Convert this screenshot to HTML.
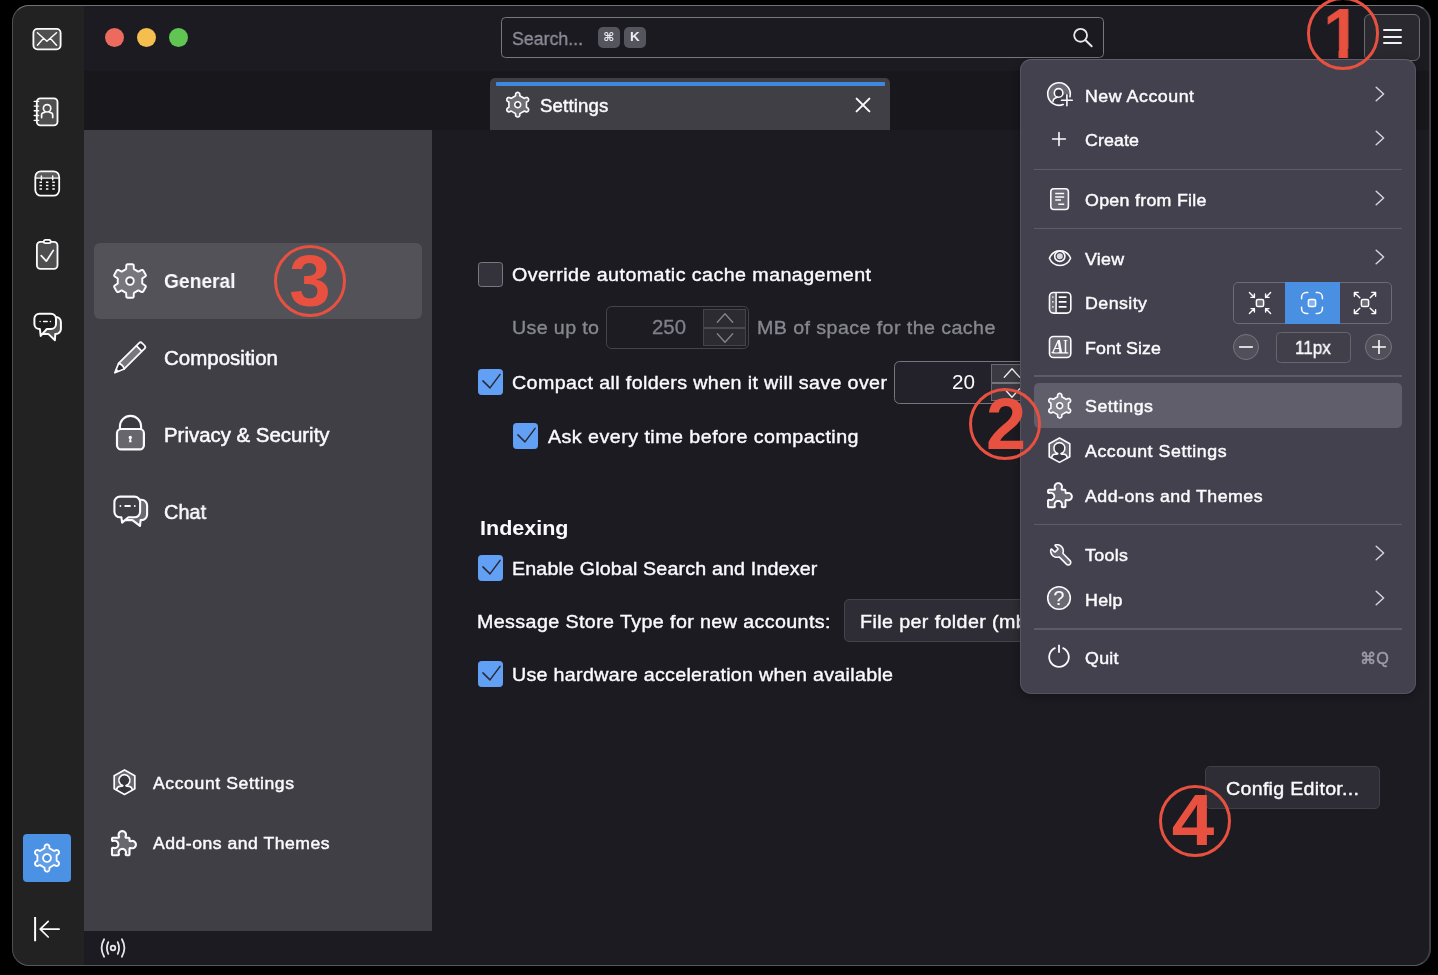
<!DOCTYPE html>
<html lang="en"><head><meta charset="utf-8"><title>Thunderbird Settings</title>
<style>
*{box-sizing:border-box;margin:0;padding:0}
html,body{width:1438px;height:975px;background:#000;overflow:hidden}
body{font-family:"Liberation Sans",sans-serif;color:#fbfbfe;position:relative}
#win{position:absolute;left:0;top:0;width:1438px;height:975px;overflow:hidden}
#frame{position:absolute;left:12px;top:4.5px;width:1419px;height:961.3px;border-radius:17px;overflow:hidden;background:#1c1b22}
#frame>.in{position:absolute;left:-12px;top:-4.5px;width:1438px;height:975px}
#frameborder{position:absolute;left:12px;top:4.5px;width:1419px;height:961.3px;border-radius:17px;border:1.5px solid #4e4e51;border-right-width:2px;border-color:#727276 #3f3f42 #58585b #4e4e51;pointer-events:none}
.b{position:absolute}
.t{position:absolute;white-space:pre;line-height:1.12;transform-origin:0 50%;will-change:transform;font-family:"Liberation Sans",sans-serif}
.i{position:absolute;overflow:visible}
.spaces{left:12px;top:4px;width:72px;height:962px;background:#222222}
.titlebar{left:84px;top:4px;width:1348px;height:67px;background:#1c1b22}
.tabbar{left:84px;top:71px;width:1348px;height:59px;background:#17171c}
.sidebar{left:84px;top:130px;width:348px;height:801px;background:#403f45}
.content{left:432px;top:130px;width:1000px;height:801px;background:#1c1b22}
.status{left:84px;top:931px;width:1348px;height:35px;background:#1c1b22}
.tl{width:19.4px;height:19.4px;border-radius:50%;top:27.8px}
.search{left:500.8px;top:17.2px;width:602.8px;height:40.6px;border:1.4px solid #77777e;border-radius:4.5px;background:#1b1a21}
.kbd{will-change:transform;top:27.2px;width:21.7px;height:20.6px;border-radius:5px;background:#55555d;color:#ececf1;font-size:13.5px;font-weight:700;text-align:center;line-height:20.6px}
.tab{left:490px;top:77.5px;width:399.5px;height:52.5px;background:#403f45;border-radius:5px 5px 0 0}
.tabline{left:495.6px;top:82px;width:389.8px;height:3.9px;border-radius:.8px;background:#3f88e0}
.hamb{left:1364px;top:13.5px;width:55.5px;height:47.5px;border:1.2px solid #696970;border-radius:6px;background:#2a2930}
.hl{left:1382.5px;width:19px;height:2px;background:#f2f2f5;border-radius:1px}
.cat-sel{left:94px;top:242.5px;width:328px;height:76.5px;border-radius:6px;background:#535259}
.spacebtn{left:23.1px;top:834.1px;width:48.1px;height:48.1px;border-radius:4px;background:#4b91e4}
.cb{width:25.6px;height:25.6px;border-radius:3.3px;border:1.3px solid #787881;background:#34333b}
.cb.on{background:#62a0f6;border-color:#62a0f6}
.num{border:1.3px solid #77767f;border-radius:5.5px;background:#23222a}
.spin{background:#3b3a42;border:1px solid #6a6a72}
.select{left:844px;top:599.4px;width:200px;height:42.3px;border-radius:5px;background:#2e2d35;border:1.2px solid #45444d}
.cfg{left:1205px;top:766.3px;width:174.8px;height:42.8px;border-radius:5px;background:#2e2d35;border:1.2px solid #403f48}
#menu{position:absolute;left:1020px;top:58.8px;width:396px;height:635.6px;border-radius:11px;background:#42414d;border:1px solid #55545f;border-top-color:#605f6a;box-shadow:0 2px 9px rgba(0,0,0,.32)}
.sep{left:1034px;width:368px;height:1.4px;background:#5c5b67}
.msel{left:1034px;top:383px;width:368px;height:45.4px;border-radius:5px;background:#5f5e6a}
.seg{left:1233px;top:282.3px;width:159px;height:41.4px;border-radius:5px;border:1.2px solid #6c6b77;background:#42414d;overflow:hidden}
.segon{left:1285.4px;top:282.3px;width:54.2px;height:41.4px;background:#4a90e2}
.segdiv{top:283px;width:1.2px;height:40px;background:#6c6b77}
.round{width:26.4px;height:26.4px;border-radius:50%;border:1.2px solid #77767f;background:#504f5a}
.fsbox{left:1276px;top:332.2px;width:75px;height:30.5px;border-radius:4.5px;border:1.2px solid #666570;background:#403f4a}
.ann{position:absolute;border:3.9px solid #e8513f;border-radius:50%;width:72.2px;height:72.2px}
.annt{will-change:transform;position:absolute;color:#e8513f;font-weight:700;width:60px;text-align:center;font-size:70px;font-family:"Liberation Sans",sans-serif;line-height:1;white-space:pre}

</style></head>
<body>
<div id="win">
<div id="frame"><div class="in">
<div class="b titlebar"></div>
<div class="b tabbar"></div>
<div class="b content"></div>
<div class="b status"></div>
<div class="b sidebar"></div>
<div class="b spaces"></div>
<div class="b spacebtn"></div>
<div class="b tl" style="left:104.7px;background:#ec6a5e"></div>
<div class="b tl" style="left:136.6px;background:#f4bf4f"></div>
<div class="b tl" style="left:168.7px;background:#61c554"></div>
<div class="b search"></div>
<div class="b kbd" style="left:598.1px;font-size:12px;font-family:'DejaVu Sans',sans-serif">&#8984;</div>
<div class="b kbd" style="left:624.2px">K</div>
<div class="b tab"></div>
<div class="b tabline"></div>
<div class="b hamb"></div>
<div class="b hl" style="top:29px"></div>
<div class="b hl" style="top:35.9px"></div>
<div class="b hl" style="top:42.2px"></div>
<div class="b cat-sel"></div>
<div class="b cb" style="left:477.5px;top:261.5px"></div>
<div class="b num" style="left:606.2px;top:306.3px;width:143px;height:42.6px;border-color:#45444c;background:#1d1c23"></div>
<div class="b spin" style="left:703.1px;top:309.2px;width:42.7px;height:36.5px;background:#2c2b32;border-color:#45444b"></div>
<div class="b" style="left:704px;top:326.5px;width:41px;height:2.2px;background:#4a4951"></div>
<div class="b num" style="left:894.1px;top:361.1px;width:143px;height:42.9px"></div>
<div class="b spin" style="left:991px;top:364.2px;width:42.7px;height:37px"></div>
<div class="b" style="left:992px;top:382px;width:41px;height:2.4px;background:#76757d"></div>
<div class="b cb on" style="left:477.5px;top:369.4px"></div>
<div class="b cb on" style="left:512.6px;top:423.2px"></div>
<div class="b cb on" style="left:477.5px;top:555.4px"></div>
<div class="b select"></div>
<div class="b cb on" style="left:477.5px;top:661px"></div>
<div class="b cfg"></div>
<div class="t" style="left:164.0px;top:270.4px;font-size:20px;color:#fbfbfe;transform:scaleX(0.9599);font-weight:700;">General</div>
<div class="t" style="left:164.0px;top:347.1px;font-size:20px;color:#fbfbfe;transform:scaleX(1.0254);-webkit-text-stroke:.5px #fbfbfe;">Composition</div>
<div class="t" style="left:164.0px;top:424.1px;font-size:20px;color:#fbfbfe;transform:scaleX(1.0199);-webkit-text-stroke:.5px #fbfbfe;">Privacy &amp; Security</div>
<div class="t" style="left:164.0px;top:501.1px;font-size:20px;color:#fbfbfe;transform:scaleX(0.9941);-webkit-text-stroke:.5px #fbfbfe;">Chat</div>
<div class="t" style="left:153.4px;top:773.8px;font-size:17px;color:#fbfbfe;letter-spacing:0.577px;transform:scaleX(1.0350);-webkit-text-stroke:.45px #fbfbfe;">Account Settings</div>
<div class="t" style="left:153.4px;top:834.4px;font-size:17px;color:#fbfbfe;letter-spacing:0.494px;transform:scaleX(1.0350);-webkit-text-stroke:.45px #fbfbfe;">Add-ons and Themes</div>
<div class="t" style="left:511.9px;top:28.1px;font-size:18.8px;color:#8f8f9b;transform:scaleX(0.9445);-webkit-text-stroke:.3px #8f8f9b;">Search...</div>
<div class="t" style="left:540.3px;top:95.9px;font-size:18px;color:#fbfbfe;letter-spacing:0.135px;transform:scaleX(1.0350);-webkit-text-stroke:.45px #fbfbfe;">Settings</div>
<div class="t" style="left:512.4px;top:264.2px;font-size:19px;color:#fbfbfe;letter-spacing:0.417px;transform:scaleX(1.0350);-webkit-text-stroke:.4px #fbfbfe;">Override automatic cache management</div>
<div class="t" style="left:512.4px;top:317.0px;font-size:19px;color:#87878f;letter-spacing:0.341px;transform:scaleX(1.0350);-webkit-text-stroke:.35px #87878f;">Use up to</div>
<div class="t" style="left:652.3px;top:316.3px;font-size:20px;color:#80808a;transform:scaleX(1.0187);-webkit-text-stroke:.3px #80808a;">250</div>
<div class="t" style="left:756.6px;top:317.0px;font-size:19px;color:#87878f;letter-spacing:0.400px;transform:scaleX(1.0350);-webkit-text-stroke:.35px #87878f;">MB of space for the cache</div>
<div class="t" style="left:512.4px;top:372.3px;font-size:19px;color:#fbfbfe;letter-spacing:0.363px;transform:scaleX(1.0350);-webkit-text-stroke:.4px #fbfbfe;">Compact all folders when it will save over</div>
<div class="t" style="left:951.8px;top:370.9px;font-size:20px;color:#fbfbfe;transform:scaleX(1.0337);">20</div>
<div class="t" style="left:547.8px;top:425.7px;font-size:19px;color:#fbfbfe;letter-spacing:0.446px;transform:scaleX(1.0350);-webkit-text-stroke:.4px #fbfbfe;">Ask every time before compacting</div>
<div class="t" style="left:480.0px;top:515.7px;font-size:21px;color:#fbfbfe;transform:scaleX(1.0250);font-weight:700;">Indexing</div>
<div class="t" style="left:512.4px;top:558.2px;font-size:19px;color:#fbfbfe;letter-spacing:0.145px;transform:scaleX(1.0350);-webkit-text-stroke:.4px #fbfbfe;">Enable Global Search and Indexer</div>
<div class="t" style="left:476.8px;top:610.5px;font-size:19px;color:#fbfbfe;letter-spacing:0.384px;transform:scaleX(1.0350);-webkit-text-stroke:.4px #fbfbfe;">Message Store Type for new accounts:</div>
<div class="t" style="left:860.4px;top:610.7px;font-size:19px;color:#fbfbfe;letter-spacing:0.387px;transform:scaleX(1.0350);-webkit-text-stroke:.4px #fbfbfe;">File per folder (mbox)</div>
<div class="t" style="left:512.4px;top:663.7px;font-size:19px;color:#fbfbfe;letter-spacing:0.285px;transform:scaleX(1.0350);-webkit-text-stroke:.4px #fbfbfe;">Use hardware acceleration when available</div>
<div class="t" style="left:1225.6px;top:777.7px;font-size:19px;color:#fbfbfe;letter-spacing:0.258px;transform:scaleX(1.0350);-webkit-text-stroke:.4px #fbfbfe;">Config Editor...</div>
<svg class="i" style="left:32.4px;top:27.3px;color:#fbfbfe;" width="30" height="24" viewBox="0 0 30 24"><rect x="1.4" y="1.9" width="27.2" height="20.4" rx="4" fill="#4f4f4f" stroke="currentColor" stroke-width="1.85"/><path fill="none" stroke="currentColor" stroke-linecap="round" stroke-linejoin="round" stroke-width="1.5" d="M5.4 5.7 L14.9 14.3 L24.5 5.7 M5.4 18.3 L11.6 11.3 M24.5 18.3 L18.3 11.3"/></svg>
<svg class="i" style="left:33.0px;top:95.5px;color:#fbfbfe;" width="27" height="32" viewBox="0 0 27 32"><rect x="3.8" y="2.3" width="20.7" height="27.1" rx="3.6" fill="#4f4f4f" stroke="currentColor" stroke-width="1.85"/><path fill="none" stroke="currentColor" stroke-linecap="round" stroke-linejoin="round" stroke-width="1.4" d="M1.2 5.4 H5.6 M1.2 10.1 H5.6 M1.2 14.8 H5.6 M1.2 19.5 H5.6 M1.2 24.4 H5.6"/><circle cx="14.1" cy="12.3" r="3.7" fill="none" stroke="currentColor" stroke-linecap="round" stroke-linejoin="round" stroke-width="1.7"/><path fill="none" stroke="currentColor" stroke-linecap="round" stroke-linejoin="round" stroke-width="1.7" d="M8.6 21.6 V18.8 Q8.6 17.3 10 16.9 L11.9 16.3 M19.7 21.6 V18.8 Q19.7 17.3 18.3 16.9 L16.4 16.3"/></svg>
<svg class="i" style="left:33.0px;top:168.5px;color:#fbfbfe;" width="28.5" height="29" viewBox="0 0 28.5 29"><rect x="2.3" y="2.3" width="23.9" height="24.4" rx="5.6" fill="#1b1b1b" stroke="none"/><path d="M2.3 9 V7.9 A5.6 5.6 0 0 1 7.9 2.3 H20.6 A5.6 5.6 0 0 1 26.2 7.9 V9 Z" fill="#5a5a5a"/><rect x="2.3" y="2.3" width="23.9" height="24.4" rx="5.6" fill="none" stroke="currentColor" stroke-linecap="round" stroke-linejoin="round" stroke-width="1.8"/><path fill="none" stroke="currentColor" stroke-linecap="butt" stroke-linejoin="round" stroke-width="1.4" d="M2.3 9.1 H26.2"/><path fill="none" stroke="currentColor" stroke-linecap="round" stroke-linejoin="round" stroke-width="1.5" d="M8.4 7.1 V10.8 M19.7 7.1 V10.8"/><path fill="none" stroke="currentColor" stroke-linecap="butt" stroke-linejoin="round" stroke-width="1.5" d="M6.5 13.3 h2.5 M12.9 13.3 h2.5 M19.3 13.3 h2.5 M6.5 16.6 h2.5 M12.9 16.6 h2.5 M19.3 16.6 h2.5 M6.5 19.9 h2.5 M12.9 19.9 h2.5 M19.3 19.9 h2.5"/></svg>
<svg class="i" style="left:34.0px;top:238.0px;color:#fbfbfe;" width="26" height="33" viewBox="0 0 26 33"><rect x="2.9" y="3.9" width="20.6" height="27" rx="3.6" fill="#4f4f4f" stroke="currentColor" stroke-width="1.85"/><rect x="9.8" y="1.9" width="6.9" height="3.2" rx="1.6" fill="#1b1b1b" stroke="currentColor" stroke-width="1.8"/><path fill="none" stroke="currentColor" stroke-linecap="round" stroke-linejoin="round" stroke-width="1.7" d="M7.2 17.7 L12.3 23.2 L19.3 12.4"/></svg>
<svg class="i" style="left:31.5px;top:311.0px;color:#fbfbfe;" width="31.5" height="32" viewBox="0 0 31.5 32"><path d="M23 5.9 H23.9 A5 5 0 0 1 28.9 10.9 V17.9 A5 5 0 0 1 23.9 22.9 H23.3 L22.9 29.2 L16.3 22.9 H10.47" fill="#555" stroke="currentColor" stroke-width="2.0" stroke-linejoin="round" stroke-linecap="round"/><path d="M7.4 2.7 H19 A5 5 0 0 1 24 7.7 V13 A5 5 0 0 1 19 18 H14.8 L8.7 24.9 L7.9 18 H7.4 A5 5 0 0 1 2.4 13 V7.7 A5 5 0 0 1 7.4 2.7 Z" fill="#1b1b1b" stroke="currentColor" stroke-width="2.0" stroke-linejoin="round"/><path fill="none" stroke="currentColor" stroke-linecap="round" stroke-linejoin="round" stroke-width="1.5" d="M8.1 10.5 h0.01 M11.6 10.5 H15.2 M18.4 10.5 h0.01"/></svg>
<svg class="i" style="left:32.1px;top:843.3px;color:#ffffff;" width="30" height="30" viewBox="-15 -15 30 30"><path d="M-10.08 3.11 L-11.00 3.53 L-11.47 3.96 L-11.82 4.49 L-12.02 5.10 L-12.05 5.74 L-11.94 6.31 L-11.67 6.89 L-11.25 7.37 L-10.86 7.66 L-10.43 7.86 L-9.96 7.97 L-9.48 8.00 L-9.01 7.92 L-8.56 7.76 L-8.15 7.51 L-7.75 7.18 L-7.51 7.07 L-7.24 7.03 L-6.89 7.11 L-2.81 9.46 L-2.58 9.64 L-2.43 9.86 L-2.35 10.11 L-2.45 11.13 L-2.33 11.86 L-2.02 12.49 L-1.51 13.03 L-0.96 13.35 L-0.29 13.53 L0.35 13.52 L0.96 13.35 L1.34 13.15 L1.71 12.85 L1.96 12.57 L2.21 12.16 L2.36 11.76 L2.44 11.29 L2.43 10.81 L2.34 10.31 L2.37 10.04 L2.52 9.71 L2.81 9.46 L6.97 7.08 L7.32 7.04 L7.58 7.09 L8.36 7.66 L8.85 7.88 L9.32 7.98 L9.80 7.99 L10.37 7.88 L10.95 7.60 L11.43 7.19 L11.75 6.75 L11.99 6.16 L12.06 5.58 L11.99 4.94 L11.80 4.44 L11.47 3.96 L11.08 3.59 L10.67 3.34 L10.10 3.12 L9.88 2.97 L9.71 2.75 L9.62 2.50 L9.60 -2.30 L9.67 -2.66 L9.87 -2.96 L10.08 -3.11 L10.67 -3.34 L11.08 -3.59 L11.47 -3.96 L11.75 -4.35 L11.97 -4.89 L12.06 -5.42 L12.02 -6.00 L11.86 -6.51 L11.54 -7.06 L11.08 -7.51 L10.52 -7.82 L9.90 -7.98 L9.26 -7.97 L8.70 -7.82 L8.28 -7.60 L7.75 -7.18 L7.51 -7.07 L7.15 -7.04 L6.79 -7.17 L2.81 -9.46 L2.58 -9.64 L2.43 -9.86 L2.35 -10.11 L2.45 -11.13 L2.33 -11.86 L2.02 -12.49 L1.51 -13.03 L0.96 -13.35 L0.35 -13.52 L-0.35 -13.52 L-0.96 -13.35 L-1.39 -13.12 L-1.71 -12.85 L-1.96 -12.57 L-2.21 -12.16 L-2.37 -11.71 L-2.44 -11.29 L-2.43 -10.81 L-2.34 -10.31 L-2.37 -10.04 L-2.52 -9.71 L-2.81 -9.46 L-6.97 -7.08 L-7.23 -7.03 L-7.58 -7.09 L-8.36 -7.66 L-8.85 -7.88 L-9.32 -7.98 L-9.80 -7.99 L-10.37 -7.88 L-10.95 -7.60 L-11.37 -7.26 L-11.75 -6.75 L-11.99 -6.16 L-12.06 -5.58 L-11.99 -4.94 L-11.80 -4.44 L-11.47 -3.96 L-11.08 -3.59 L-10.67 -3.34 L-10.10 -3.12 L-9.88 -2.97 L-9.67 -2.67 L-9.61 -2.41 L-9.61 2.41 L-9.71 2.74 L-9.87 2.96ZM3.89 0.26 L3.77 1.01 L3.50 1.72 L3.09 2.37 L2.57 2.93 L1.95 3.38 L1.25 3.69 L0.51 3.87 L-0.26 3.89 L-1.01 3.77 L-1.72 3.50 L-2.37 3.09 L-2.93 2.57 L-3.38 1.95 L-3.69 1.25 L-3.87 0.51 L-3.89 -0.26 L-3.77 -1.01 L-3.50 -1.72 L-3.09 -2.37 L-2.57 -2.93 L-1.95 -3.38 L-1.25 -3.69 L-0.51 -3.87 L0.26 -3.89 L1.01 -3.77 L1.72 -3.50 L2.37 -3.09 L2.93 -2.57 L3.38 -1.95 L3.69 -1.25 L3.87 -0.51Z" fill="currentColor" fill-opacity="0.13" fill-rule="evenodd" stroke="currentColor" stroke-width="1.8" stroke-linejoin="round"/></svg>
<svg class="i" style="left:33.0px;top:916.0px;color:#fbfbfe;" width="28" height="26" viewBox="0 0 28 26"><path fill="none" stroke="currentColor" stroke-linecap="butt" stroke-linejoin="round" stroke-width="2" d="M2.1 1.1 V25.3"/><path fill="none" stroke="currentColor" stroke-linecap="round" stroke-linejoin="round" stroke-width="1.7" d="M26.1 13.2 H7.4 M15.2 5.4 L7.2 13.2 L15.2 21"/></svg>
<svg class="i" style="left:98.8px;top:937.4px;color:#e6e6ea;" width="28" height="22" viewBox="-14 -11 28 22"><circle cx="0" cy="0" r="2.3" fill="none" stroke="currentColor" stroke-linecap="round" stroke-linejoin="round" stroke-width="1.8"/><path fill="none" stroke="currentColor" stroke-linecap="round" stroke-linejoin="round" stroke-width="1.8" d="M-4.7 -5.9 Q-7.5 0 -4.7 5.9 M4.7 -5.9 Q7.5 0 4.7 5.9 M-8.9 -8.7 Q-13.9 0 -8.9 8.7 M8.9 -8.7 Q13.9 0 8.9 8.7"/></svg>
<svg class="i" style="left:111.3px;top:261.5px;color:#fbfbfe;" width="38" height="38" viewBox="-19 -19 38 38"><path d="M-15.68 -6.24 L-15.82 -5.89 L-15.85 -5.52 L-15.78 -5.15 L-15.52 -4.72 L-15.23 -4.48 L-12.69 -2.91 L-12.35 -2.54 L-12.21 -2.19 L-12.17 -1.94 L-12.30 -0.02 L-12.17 1.94 L-12.29 2.43 L-12.42 2.64 L-12.69 2.91 L-15.23 4.48 L-15.52 4.72 L-15.73 5.04 L-15.85 5.52 L-15.82 5.89 L-15.68 6.24 L-13.25 10.46 L-13.01 10.75 L-12.71 10.97 L-12.23 11.10 L-11.73 11.05 L-8.86 9.53 L-8.62 9.45 L-8.25 9.43 L-7.76 9.57 L-6.17 10.64 L-4.30 11.58 L-3.98 11.97 L-3.82 12.44 L-3.73 15.43 L-3.67 15.80 L-3.43 16.24 L-3.25 16.41 L-2.92 16.60 L-2.43 16.70 L2.43 16.70 L2.68 16.68 L3.04 16.55 L3.43 16.24 L3.62 15.92 L3.70 15.68 L3.82 12.44 L3.98 11.97 L4.30 11.58 L6.17 10.64 L7.76 9.57 L8.25 9.43 L8.62 9.45 L8.86 9.53 L11.73 11.05 L12.23 11.10 L12.71 10.97 L13.01 10.75 L13.25 10.46 L15.78 6.01 L15.85 5.65 L15.84 5.40 L15.73 5.04 L15.52 4.72 L15.23 4.48 L12.69 2.91 L12.35 2.54 L12.24 2.31 L12.17 1.94 L12.30 0.02 L12.17 -1.94 L12.29 -2.43 L12.50 -2.74 L12.69 -2.91 L15.23 -4.48 L15.52 -4.72 L15.73 -5.04 L15.85 -5.52 L15.82 -5.89 L15.68 -6.24 L13.25 -10.46 L13.01 -10.75 L12.71 -10.97 L12.23 -11.10 L11.73 -11.05 L8.86 -9.53 L8.62 -9.45 L8.25 -9.43 L7.76 -9.57 L6.17 -10.64 L4.30 -11.58 L3.98 -11.97 L3.82 -12.44 L3.73 -15.43 L3.67 -15.80 L3.43 -16.24 L3.25 -16.41 L2.92 -16.60 L2.43 -16.70 L-2.43 -16.70 L-2.68 -16.68 L-3.04 -16.55 L-3.43 -16.24 L-3.57 -16.03 L-3.70 -15.68 L-3.82 -12.44 L-3.98 -11.97 L-4.30 -11.58 L-6.17 -10.64 L-7.76 -9.57 L-8.25 -9.43 L-8.62 -9.45 L-8.86 -9.53 L-11.73 -11.05 L-12.23 -11.10 L-12.71 -10.97 L-13.01 -10.75 L-13.25 -10.46Z" fill="#77767d" stroke="currentColor" stroke-width="1.95" stroke-linejoin="round"/><circle cx="0" cy="0" r="3.8" fill="#535259" stroke="currentColor" stroke-width="1.95"/></svg>
<svg class="i" style="left:112.0px;top:339.0px;color:#fbfbfe;" width="36" height="36" viewBox="0 0 36 36"><g transform="translate(2.2 34.4) rotate(-45)"><path d="M10.2 -3.95 H35.2 V3.95 H10.2 Z" fill="#78777e"/><path d="M35.2 -3.95 H39.0 A2.2 2.2 0 0 1 41.2 -1.75 V1.75 A2.2 2.2 0 0 1 39.0 3.95 H35.2 Z" fill="#36353b"/><path d="M0.9 0 L10.2 -3.95 V3.95 Z" fill="#2c2b31"/><path d="M0.9 0 L5 -1.6 V1.6 Z" fill="currentColor"/><path fill="none" stroke="currentColor" stroke-linecap="round" stroke-linejoin="round" stroke-width="1.75" d="M0.9 0 L10.2 -3.95 H39.0 A2.2 2.2 0 0 1 41.2 -1.75 V1.75 A2.2 2.2 0 0 1 39.0 3.95 H10.2 Z M35.2 -3.95 V3.95"/><path fill="none" stroke="currentColor" stroke-linecap="round" stroke-linejoin="round" stroke-width="1.6" d="M10.2 -3.95 Q12.6 0 10.2 3.95"/></g></svg>
<svg class="i" style="left:114.0px;top:413.0px;color:#fbfbfe;" width="33" height="39" viewBox="0 0 33 39"><path d="M5.9 16 V13.5 A10.6 10.6 0 0 1 27.1 13.5 V16 Z" fill="#3a393f"/><path fill="none" stroke="currentColor" stroke-linecap="round" stroke-linejoin="round" stroke-width="2.1" d="M5.9 16 V13.5 A10.6 10.6 0 0 1 27.1 13.5 V16"/><rect x="3" y="16" width="26.9" height="20.4" rx="4.2" fill="#67666d" stroke="currentColor" stroke-width="2.2"/><circle cx="16.3" cy="24.4" r="1.7" fill="currentColor"/><path d="M15.7 25.2 L14.9 29.3 H17.7 L16.9 25.2 Z" fill="currentColor"/></svg>
<svg class="i" style="left:111.5px;top:493.5px;color:#fbfbfe;" width="37.5" height="34.5" viewBox="0 0 37.5 34.5"><path d="M27.1 5.800000000000001 H29.5 A5.6 5.6 0 0 1 35.1 11.4 V20.5 A5.6 5.6 0 0 1 29.5 26.1 H28.6 L28 31.9 L20.4 26.1 H13.07" fill="#6a696f" stroke="currentColor" stroke-width="2.1" stroke-linejoin="round" stroke-linecap="round"/><path d="M8.0 2.6 H22.5 A5.6 5.6 0 0 1 28.1 8.2 V17.700000000000003 A5.6 5.6 0 0 1 22.5 23.3 H16.4 L10.1 28.6 L9.4 23.3 H8.0 A5.6 5.6 0 0 1 2.4 17.700000000000003 V8.2 A5.6 5.6 0 0 1 8.0 2.6 Z" fill="#403f45" stroke="currentColor" stroke-width="2.1" stroke-linejoin="round"/><path fill="none" stroke="currentColor" stroke-linecap="round" stroke-linejoin="round" stroke-width="1.8" d="M8.4 12 h0.01 M13.2 12 H18 M22.8 12 h0.01"/></svg>
<svg class="i" style="left:111.5px;top:768.0px;color:#fbfbfe;" width="25" height="28.5" viewBox="0 0 25 28.5"><path d="M12.5 2 L22.8 7.7 V20.8 L12.5 26.4 L2.2 20.8 V7.7 Z" fill="#67666d" stroke="none"/><path d="M4.6 21.7 C4.9 19.6 5.6 18.5 7.6 18.3 L10 18.2 Q10.9 18.1 10.75 17.45 A5.55 5.55 0 1 1 14.05 17.45 Q13.9 18.1 14.8 18.2 L17.2 18.3 C19.2 18.5 19.9 19.6 20.2 21.7 L12.5 26.4 Z" fill="#36353b"/><path fill="none" stroke="currentColor" stroke-linecap="round" stroke-linejoin="round" stroke-width="1.7" d="M4.6 21.7 C4.9 19.6 5.6 18.5 7.6 18.3 L10 18.2 Q10.9 18.1 10.75 17.45 A5.55 5.55 0 1 1 14.05 17.45 Q13.9 18.1 14.8 18.2 L17.2 18.3 C19.2 18.5 19.9 19.6 20.2 21.7"/><path d="M12.5 2 L22.8 7.7 V20.8 L12.5 26.4 L2.2 20.8 V7.7 Z" fill="none" stroke="currentColor" stroke-linecap="round" stroke-linejoin="round" stroke-width="1.75"/></svg>
<svg class="i" style="left:110.0px;top:829.0px;color:#fbfbfe;" width="29" height="29" viewBox="0 0 29 29"><path d="M3.22 18.83 L2.79 18.78 L2.39 18.93 L2.10 19.26 L2.00 19.59 L2.00 25.39 L2.07 25.64 L2.20 25.87 L2.56 26.13 L2.90 26.20 L8.03 26.20 L8.28 26.16 L8.52 26.05 L8.81 25.74 L8.92 25.41 L8.90 25.07 L8.64 24.13 L8.61 23.40 L8.66 22.92 L8.78 22.45 L9.12 21.71 L9.39 21.31 L9.72 20.95 L10.08 20.64 L10.49 20.37 L10.93 20.17 L11.39 20.02 L11.86 19.93 L12.34 19.90 L12.83 19.94 L13.30 20.04 L13.76 20.20 L14.19 20.42 L14.88 20.95 L15.21 21.31 L15.48 21.71 L15.79 22.37 L15.97 23.16 L16.00 23.64 L15.96 24.13 L15.70 25.07 L15.67 25.32 L15.75 25.66 L15.95 25.94 L16.16 26.10 L16.49 26.20 L18.78 26.18 L19.10 26.05 L19.30 25.87 L19.43 25.64 L19.50 25.39 L19.50 19.85 L19.54 19.57 L19.65 19.33 L19.98 19.04 L20.40 18.93 L21.69 19.26 L22.17 19.30 L22.71 19.26 L23.59 19.03 L24.28 18.66 L24.66 18.36 L25.00 18.02 L25.29 17.63 L25.61 17.04 L25.78 16.53 L25.87 16.05 L25.89 15.39 L25.83 14.91 L25.61 14.16 L25.15 13.37 L24.62 12.80 L24.23 12.51 L23.81 12.27 L23.13 12.02 L22.41 11.91 L21.51 11.97 L20.42 12.27 L20.07 12.20 L19.77 12.01 L19.61 11.80 L19.51 11.46 L19.48 9.52 L19.35 9.20 L19.10 8.95 L18.69 8.80 L16.30 8.79 L16.05 8.73 L15.82 8.59 L15.56 8.24 L15.50 7.81 L15.92 6.55 L15.99 6.01 L15.99 5.53 L15.92 5.05 L15.79 4.58 L15.39 3.77 L15.10 3.38 L14.72 3.00 L14.18 2.61 L13.74 2.39 L13.29 2.23 L12.75 2.13 L12.27 2.10 L11.61 2.17 L11.14 2.29 L10.69 2.47 L10.02 2.88 L9.38 3.52 L9.11 3.92 L8.89 4.36 L8.67 5.11 L8.61 6.01 L8.72 6.73 L9.07 7.64 L9.11 7.90 L9.04 8.24 L8.78 8.59 L8.47 8.76 L8.19 8.80 L2.81 8.80 L2.40 8.95 L2.11 9.28 L2.00 9.61 L2.00 11.21 L2.10 11.54 L2.32 11.81 L2.62 11.98 L2.96 12.02 L4.07 11.74 L4.89 11.71 L5.60 11.84 L6.28 12.10 L7.01 12.59 L7.35 12.93 L7.65 13.31 L8.03 14.03 L8.18 14.49 L8.27 14.96 L8.30 15.44 L8.26 15.93 L8.16 16.40 L8.00 16.86 L7.78 17.29 L7.51 17.69 L7.18 18.05 L6.82 18.36 L6.41 18.63 L5.97 18.83 L5.51 18.98 L5.04 19.07 L4.56 19.10 L4.07 19.06Z" fill="#69686e" stroke="currentColor" stroke-width="2.1" stroke-linejoin="round"/></svg>
<svg class="i" style="left:503.6px;top:91.2px;color:#fbfbfe;" width="27.4" height="27.4" viewBox="-15 -15 30 30"><path d="M-10.76 -3.50 L-9.93 -3.12 L-9.75 -2.92 L-9.61 -2.51 L-9.62 2.60 L-9.75 2.92 L-9.93 3.12 L-10.16 3.25 L-10.68 3.46 L-11.07 3.70 L-11.40 4.02 L-11.71 4.48 L-11.89 4.97 L-11.96 5.58 L-11.87 6.19 L-11.66 6.70 L-11.36 7.12 L-10.89 7.52 L-10.40 7.76 L-9.80 7.89 L-9.28 7.88 L-8.74 7.73 L-8.28 7.49 L-7.82 7.12 L-7.58 7.01 L-7.32 6.98 L-7.06 7.03 L-2.72 9.51 L-2.44 9.76 L-2.28 10.07 L-2.25 10.33 L-2.34 10.92 L-2.34 11.28 L-2.28 11.68 L-2.12 12.11 L-1.88 12.51 L-1.64 12.78 L-1.28 13.07 L-0.93 13.26 L-0.34 13.43 L0.28 13.43 L0.93 13.26 L1.45 12.95 L1.94 12.43 L2.23 11.83 L2.35 11.13 L2.26 10.16 L2.34 9.91 L2.49 9.69 L2.72 9.51 L6.88 7.11 L7.23 6.99 L7.58 7.01 L7.82 7.12 L8.28 7.49 L8.74 7.73 L9.34 7.88 L9.89 7.88 L10.48 7.73 L11.02 7.43 L11.46 7.00 L11.77 6.48 L11.92 5.98 L11.96 5.43 L11.87 4.91 L11.71 4.48 L11.40 4.02 L11.07 3.70 L10.63 3.43 L10.08 3.22 L9.86 3.06 L9.67 2.77 L9.60 2.40 L9.62 -2.60 L9.75 -2.92 L9.93 -3.12 L10.16 -3.25 L10.68 -3.46 L11.07 -3.70 L11.46 -4.10 L11.71 -4.48 L11.89 -4.97 L11.96 -5.58 L11.87 -6.19 L11.66 -6.70 L11.29 -7.19 L10.89 -7.52 L10.34 -7.78 L9.80 -7.89 L9.28 -7.88 L8.74 -7.73 L8.28 -7.49 L7.82 -7.12 L7.58 -7.01 L7.32 -6.98 L7.06 -7.03 L2.72 -9.51 L2.44 -9.76 L2.28 -10.07 L2.25 -10.33 L2.34 -10.92 L2.34 -11.28 L2.28 -11.68 L2.12 -12.11 L1.88 -12.51 L1.64 -12.78 L1.33 -13.04 L0.93 -13.26 L0.34 -13.43 L-0.28 -13.43 L-0.87 -13.28 L-1.45 -12.95 L-1.94 -12.43 L-2.23 -11.83 L-2.35 -11.13 L-2.26 -10.16 L-2.34 -9.91 L-2.49 -9.69 L-2.72 -9.51 L-6.98 -7.06 L-7.32 -6.98 L-7.67 -7.04 L-8.60 -7.67 L-9.03 -7.83 L-9.49 -7.90 L-9.95 -7.88 L-10.40 -7.76 L-10.81 -7.57 L-11.18 -7.30 L-11.58 -6.83 L-11.87 -6.19 L-11.96 -5.58 L-11.89 -4.97 L-11.66 -4.40 L-11.25 -3.87ZM3.19 0.21 L3.09 0.83 L2.87 1.42 L2.54 1.95 L2.11 2.41 L1.60 2.77 L1.03 3.03 L0.42 3.17 L-0.21 3.19 L-0.83 3.09 L-1.42 2.87 L-1.95 2.54 L-2.41 2.11 L-2.77 1.60 L-3.03 1.03 L-3.17 0.42 L-3.19 -0.21 L-3.09 -0.83 L-2.87 -1.42 L-2.54 -1.95 L-2.11 -2.41 L-1.60 -2.77 L-1.03 -3.03 L-0.42 -3.17 L0.21 -3.19 L0.83 -3.09 L1.42 -2.87 L1.95 -2.54 L2.41 -2.11 L2.77 -1.60 L3.03 -1.03 L3.17 -0.42Z" fill="currentColor" fill-opacity="0.25" fill-rule="evenodd" stroke="currentColor" stroke-width="1.8" stroke-linejoin="round"/></svg>
<svg class="i" style="left:854.9px;top:97.0px;color:#fbfbfe;" width="16" height="16" viewBox="0 0 16 16"><path fill="none" stroke="currentColor" stroke-linecap="round" stroke-linejoin="round" stroke-width="2" d="M1.6 1.6 L14.4 14.4 M14.4 1.6 L1.6 14.4"/></svg>
<svg class="i" style="left:1073.0px;top:28.0px;color:#e8e8ee;" width="20" height="20" viewBox="0 0 20 20"><circle cx="7.6" cy="7.3" r="6.45" fill="none" stroke="currentColor" stroke-linecap="round" stroke-linejoin="round" stroke-width="1.8"/><path fill="none" stroke="currentColor" stroke-linecap="round" stroke-linejoin="round" stroke-width="1.9" d="M12.3 12 L18.7 18.3"/></svg>
<svg class="i" style="left:477.6px;top:369.4px;color:#2b2a33;" width="25.6" height="25.6" viewBox="0 0 25.6 25.6"><path fill="none" stroke="currentColor" stroke-linecap="round" stroke-linejoin="round" stroke-width="1.5" d="M4.9 11.9 L12 18.9 L22.1 5.4"/></svg>
<svg class="i" style="left:512.6px;top:423.2px;color:#2b2a33;" width="25.6" height="25.6" viewBox="0 0 25.6 25.6"><path fill="none" stroke="currentColor" stroke-linecap="round" stroke-linejoin="round" stroke-width="1.5" d="M4.9 11.9 L12 18.9 L22.1 5.4"/></svg>
<svg class="i" style="left:477.6px;top:555.4px;color:#2b2a33;" width="25.6" height="25.6" viewBox="0 0 25.6 25.6"><path fill="none" stroke="currentColor" stroke-linecap="round" stroke-linejoin="round" stroke-width="1.5" d="M4.9 11.9 L12 18.9 L22.1 5.4"/></svg>
<svg class="i" style="left:477.6px;top:661.0px;color:#2b2a33;" width="25.6" height="25.6" viewBox="0 0 25.6 25.6"><path fill="none" stroke="currentColor" stroke-linecap="round" stroke-linejoin="round" stroke-width="1.5" d="M4.9 11.9 L12 18.9 L22.1 5.4"/></svg>
<svg class="i" style="left:715.6px;top:313.4px;color:#85858d;" width="18" height="10" viewBox="0 0 18 10"><path fill="none" stroke="currentColor" stroke-linecap="round" stroke-linejoin="round" stroke-width="1.3" d="M1.3 9.3 L9 0.8 L16.7 9.3"/></svg>
<svg class="i" style="left:715.6px;top:332.6px;color:#85858d;" width="18" height="10" viewBox="0 0 18 10"><path fill="none" stroke="currentColor" stroke-linecap="round" stroke-linejoin="round" stroke-width="1.3" d="M1.3 0.7 L9 9.2 L16.7 0.7"/></svg>
<svg class="i" style="left:1003.3px;top:368.4px;color:#f0f0f4;" width="18" height="10" viewBox="0 0 18 10"><path fill="none" stroke="currentColor" stroke-linecap="round" stroke-linejoin="round" stroke-width="1.3" d="M1.3 9.3 L9 0.8 L16.7 9.3"/></svg>
<svg class="i" style="left:1003.3px;top:387.6px;color:#f0f0f4;" width="18" height="10" viewBox="0 0 18 10"><path fill="none" stroke="currentColor" stroke-linecap="round" stroke-linejoin="round" stroke-width="1.3" d="M1.3 0.7 L9 9.2 L16.7 0.7"/></svg>
</div></div>
<div id="frameborder"></div>
<div id="menu"></div>
<div class="b msel"></div>
<div class="b sep" style="top:168.8px"></div>
<div class="b sep" style="top:227.8px"></div>
<div class="b sep" style="top:375.4px"></div>
<div class="b sep" style="top:523.8px"></div>
<div class="b sep" style="top:628.2px"></div>
<div class="b seg"></div>
<div class="b segon"></div>
<div class="b round" style="left:1232.8px;top:334.1px"></div>
<div class="b round" style="left:1365.4px;top:334.1px"></div>
<div class="b fsbox"></div>
<div class="t" style="left:1084.9px;top:86.5px;font-size:17.2px;color:#fbfbfe;letter-spacing:0.499px;transform:scaleX(1.0350);-webkit-text-stroke:.45px #fbfbfe;">New Account</div>
<div class="t" style="left:1084.9px;top:131.2px;font-size:17.2px;color:#fbfbfe;letter-spacing:0.116px;transform:scaleX(1.0350);-webkit-text-stroke:.45px #fbfbfe;">Create</div>
<div class="t" style="left:1084.9px;top:190.5px;font-size:17.2px;color:#fbfbfe;letter-spacing:0.286px;transform:scaleX(1.0350);-webkit-text-stroke:.45px #fbfbfe;">Open from File</div>
<div class="t" style="left:1084.9px;top:249.5px;font-size:17.2px;color:#fbfbfe;letter-spacing:0.243px;transform:scaleX(1.0350);-webkit-text-stroke:.45px #fbfbfe;">View</div>
<div class="t" style="left:1084.9px;top:294.3px;font-size:17.2px;color:#fbfbfe;letter-spacing:0.432px;transform:scaleX(1.0350);-webkit-text-stroke:.45px #fbfbfe;">Density</div>
<div class="t" style="left:1084.9px;top:338.5px;font-size:17.2px;color:#fbfbfe;letter-spacing:0.103px;transform:scaleX(1.0350);-webkit-text-stroke:.45px #fbfbfe;">Font Size</div>
<div class="t" style="left:1084.9px;top:396.9px;font-size:17.2px;color:#fbfbfe;letter-spacing:0.513px;transform:scaleX(1.0350);-webkit-text-stroke:.45px #fbfbfe;">Settings</div>
<div class="t" style="left:1084.9px;top:441.9px;font-size:17.2px;color:#fbfbfe;letter-spacing:0.522px;transform:scaleX(1.0350);-webkit-text-stroke:.45px #fbfbfe;">Account Settings</div>
<div class="t" style="left:1084.9px;top:486.9px;font-size:17.2px;color:#fbfbfe;letter-spacing:0.445px;transform:scaleX(1.0350);-webkit-text-stroke:.45px #fbfbfe;">Add-ons and Themes</div>
<div class="t" style="left:1084.9px;top:545.5px;font-size:17.2px;color:#fbfbfe;letter-spacing:0.355px;transform:scaleX(1.0350);-webkit-text-stroke:.45px #fbfbfe;">Tools</div>
<div class="t" style="left:1084.9px;top:590.5px;font-size:17.2px;color:#fbfbfe;letter-spacing:0.291px;transform:scaleX(1.0350);-webkit-text-stroke:.45px #fbfbfe;">Help</div>
<div class="t" style="left:1084.9px;top:649.2px;font-size:17.2px;color:#fbfbfe;letter-spacing:0.279px;transform:scaleX(1.0350);-webkit-text-stroke:.45px #fbfbfe;">Quit</div>
<div class="t" style="left:1294.8px;top:337.5px;font-size:18px;color:#fbfbfe;transform:scaleX(0.9469);-webkit-text-stroke:.45px #fbfbfe;">11px</div>
<div class="t" style="left:1360.0px;top:650.1px;font-size:16px;color:#9e9da8;transform:scaleX(1.0087);-webkit-text-stroke:.45px #9e9da8;">⌘Q</div>
<svg class="i" style="left:1374.5px;top:85.5px;color:#d4d4dc;" width="10" height="16" viewBox="0 0 10 16"><path fill="none" stroke="currentColor" stroke-linecap="round" stroke-linejoin="round" stroke-width="1.5" d="M1.2 1.2 L8.6 8 L1.2 14.8"/></svg>
<svg class="i" style="left:1374.5px;top:130.0px;color:#d4d4dc;" width="10" height="16" viewBox="0 0 10 16"><path fill="none" stroke="currentColor" stroke-linecap="round" stroke-linejoin="round" stroke-width="1.5" d="M1.2 1.2 L8.6 8 L1.2 14.8"/></svg>
<svg class="i" style="left:1374.5px;top:189.5px;color:#d4d4dc;" width="10" height="16" viewBox="0 0 10 16"><path fill="none" stroke="currentColor" stroke-linecap="round" stroke-linejoin="round" stroke-width="1.5" d="M1.2 1.2 L8.6 8 L1.2 14.8"/></svg>
<svg class="i" style="left:1374.5px;top:248.5px;color:#d4d4dc;" width="10" height="16" viewBox="0 0 10 16"><path fill="none" stroke="currentColor" stroke-linecap="round" stroke-linejoin="round" stroke-width="1.5" d="M1.2 1.2 L8.6 8 L1.2 14.8"/></svg>
<svg class="i" style="left:1374.5px;top:544.5px;color:#d4d4dc;" width="10" height="16" viewBox="0 0 10 16"><path fill="none" stroke="currentColor" stroke-linecap="round" stroke-linejoin="round" stroke-width="1.5" d="M1.2 1.2 L8.6 8 L1.2 14.8"/></svg>
<svg class="i" style="left:1374.5px;top:589.5px;color:#d4d4dc;" width="10" height="16" viewBox="0 0 10 16"><path fill="none" stroke="currentColor" stroke-linecap="round" stroke-linejoin="round" stroke-width="1.5" d="M1.2 1.2 L8.6 8 L1.2 14.8"/></svg>
<svg class="i" style="left:1046.0px;top:81.1px;color:#fbfbfe;" width="28" height="28" viewBox="-13 -13 28 28"><circle cx="0" cy="0" r="11.3" fill="#696873"/><path d="M-6 7.3 C-5.8 5 -5 4.4 -3.6 4 L-1.6 3.2 H1 L3.2 4 C4.6 4.4 5.4 5 5.6 7.3 L3 10.6 H-3 Z" fill="#3b3a45"/><circle cx="7.9" cy="6.3" r="6.6" fill="#42414d"/><path fill="none" stroke="currentColor" stroke-linecap="round" stroke-linejoin="round" stroke-width="1.6" d="M10.96 2.73 A11.3 11.3 0 1 0 4.23 10.48"/><circle cx="-0.4" cy="-1.1" r="4.3" fill="#3b3a45" stroke="currentColor" stroke-width="1.6"/><path fill="none" stroke="currentColor" stroke-linecap="round" stroke-linejoin="round" stroke-width="1.6" d="M-6 7.3 C-5.8 5 -5 4.4 -3.6 4 L-1.8 3.3"/><path fill="none" stroke="currentColor" stroke-linecap="round" stroke-linejoin="round" stroke-width="1.6" d="M2.5 6.3 H13.3 M7.9 0.9 V11.7"/></svg>
<svg class="i" style="left:1050.9px;top:130.8px;color:#fbfbfe;" width="16" height="16" viewBox="-8 -8 16 16"><path fill="none" stroke="currentColor" stroke-linecap="round" stroke-linejoin="round" stroke-width="1.6" d="M-6.4 0 H6.4 M0 -6.4 V6.4"/></svg>
<svg class="i" style="left:1049.0px;top:187.0px;color:#fbfbfe;" width="21" height="24.5" viewBox="0 0 21 24.5"><rect x="1.8" y="1.7" width="17.6" height="20.8" rx="3" fill="#696873" stroke="currentColor" stroke-width="1.6"/><path fill="none" stroke="currentColor" stroke-linecap="butt" stroke-linejoin="round" stroke-width="1.5" d="M6.2 6.5 H15.2 M6.2 9.9 H15.2 M6.2 13.1 H12 M9.3 17.3 H15.2"/></svg>
<svg class="i" style="left:1046.7px;top:248.3px;color:#fbfbfe;" width="26" height="20" viewBox="-13 -10 26 20"><path fill="none" stroke="currentColor" stroke-linecap="round" stroke-linejoin="round" stroke-width="1.6" d="M-10.6 0.3 C-6.5 -9.6 6.5 -9.6 10.6 0.3 C6.5 9.8 -6.5 9.8 -10.6 0.3 Z"/><circle cx="-0.2" cy="-1.7" r="5.1" fill="none" stroke="currentColor" stroke-linecap="round" stroke-linejoin="round" stroke-width="1.6"/><circle cx="-0.2" cy="-1.7" r="3" fill="#d8d8e0"/></svg>
<svg class="i" style="left:1047.5px;top:291.3px;color:#fbfbfe;" width="24.5" height="24" viewBox="0 0 24.5 24"><rect x="1.5" y="1.5" width="21.3" height="20.6" rx="4" fill="#3b3a45"/><path d="M8.1 1.5 V22.1 H5.5 A4 4 0 0 1 1.5 18.1 V5.5 A4 4 0 0 1 5.5 1.5 Z" fill="#696873"/><rect x="1.5" y="1.5" width="21.3" height="20.6" rx="4" fill="none" stroke="currentColor" stroke-linecap="round" stroke-linejoin="round" stroke-width="1.6"/><path fill="none" stroke="currentColor" stroke-linecap="butt" stroke-linejoin="round" stroke-width="1.5" d="M8.1 1.5 V22.1"/><path fill="none" stroke="currentColor" stroke-linecap="round" stroke-linejoin="round" stroke-width="1.6" d="M4.9 6.1 h.01 M4.9 10.9 h.01 M4.9 15.9 h.01"/><path fill="none" stroke="currentColor" stroke-linecap="butt" stroke-linejoin="round" stroke-width="1.6" d="M10.7 6.1 H18.5 M10.7 10.9 H18.5 M10.7 15.9 H18.5"/></svg>
<svg class="i" style="left:1047.5px;top:335.2px;color:#fbfbfe;" width="24.5" height="24" viewBox="0 0 24.5 24"><rect x="1.5" y="1.5" width="21.3" height="21" rx="4" fill="#696873" stroke="currentColor" stroke-width="1.6"/><text x="4.3" y="18" font-family="Liberation Serif, serif" font-style="italic" font-weight="700" font-size="18" fill="currentColor" textLength="11.3" lengthAdjust="spacingAndGlyphs">A</text><text x="14.9" y="18" font-family="Liberation Serif, serif" font-size="18" fill="currentColor" textLength="5" lengthAdjust="spacingAndGlyphs">I</text><path fill="none" stroke="currentColor" stroke-linecap="butt" stroke-linejoin="round" stroke-width="1.1" d="M4.4 18 H20.3"/></svg>
<svg class="i" style="left:1046.0px;top:391.9px;color:#fbfbfe;" width="27.4" height="27.4" viewBox="-15 -15 30 30"><path d="M-10.76 -3.50 L-9.93 -3.12 L-9.75 -2.92 L-9.61 -2.51 L-9.62 2.60 L-9.75 2.92 L-9.93 3.12 L-10.16 3.25 L-10.68 3.46 L-11.07 3.70 L-11.40 4.02 L-11.71 4.48 L-11.89 4.97 L-11.96 5.58 L-11.87 6.19 L-11.66 6.70 L-11.36 7.12 L-10.89 7.52 L-10.40 7.76 L-9.80 7.89 L-9.28 7.88 L-8.74 7.73 L-8.28 7.49 L-7.82 7.12 L-7.58 7.01 L-7.32 6.98 L-7.06 7.03 L-2.72 9.51 L-2.44 9.76 L-2.28 10.07 L-2.25 10.33 L-2.34 10.92 L-2.34 11.28 L-2.28 11.68 L-2.12 12.11 L-1.88 12.51 L-1.64 12.78 L-1.28 13.07 L-0.93 13.26 L-0.34 13.43 L0.28 13.43 L0.93 13.26 L1.45 12.95 L1.94 12.43 L2.23 11.83 L2.35 11.13 L2.26 10.16 L2.34 9.91 L2.49 9.69 L2.72 9.51 L6.88 7.11 L7.23 6.99 L7.58 7.01 L7.82 7.12 L8.28 7.49 L8.74 7.73 L9.34 7.88 L9.89 7.88 L10.48 7.73 L11.02 7.43 L11.46 7.00 L11.77 6.48 L11.92 5.98 L11.96 5.43 L11.87 4.91 L11.71 4.48 L11.40 4.02 L11.07 3.70 L10.63 3.43 L10.08 3.22 L9.86 3.06 L9.67 2.77 L9.60 2.40 L9.62 -2.60 L9.75 -2.92 L9.93 -3.12 L10.16 -3.25 L10.68 -3.46 L11.07 -3.70 L11.46 -4.10 L11.71 -4.48 L11.89 -4.97 L11.96 -5.58 L11.87 -6.19 L11.66 -6.70 L11.29 -7.19 L10.89 -7.52 L10.34 -7.78 L9.80 -7.89 L9.28 -7.88 L8.74 -7.73 L8.28 -7.49 L7.82 -7.12 L7.58 -7.01 L7.32 -6.98 L7.06 -7.03 L2.72 -9.51 L2.44 -9.76 L2.28 -10.07 L2.25 -10.33 L2.34 -10.92 L2.34 -11.28 L2.28 -11.68 L2.12 -12.11 L1.88 -12.51 L1.64 -12.78 L1.33 -13.04 L0.93 -13.26 L0.34 -13.43 L-0.28 -13.43 L-0.87 -13.28 L-1.45 -12.95 L-1.94 -12.43 L-2.23 -11.83 L-2.35 -11.13 L-2.26 -10.16 L-2.34 -9.91 L-2.49 -9.69 L-2.72 -9.51 L-6.98 -7.06 L-7.32 -6.98 L-7.67 -7.04 L-8.60 -7.67 L-9.03 -7.83 L-9.49 -7.90 L-9.95 -7.88 L-10.40 -7.76 L-10.81 -7.57 L-11.18 -7.30 L-11.58 -6.83 L-11.87 -6.19 L-11.96 -5.58 L-11.89 -4.97 L-11.66 -4.40 L-11.25 -3.87ZM3.19 0.21 L3.09 0.83 L2.87 1.42 L2.54 1.95 L2.11 2.41 L1.60 2.77 L1.03 3.03 L0.42 3.17 L-0.21 3.19 L-0.83 3.09 L-1.42 2.87 L-1.95 2.54 L-2.41 2.11 L-2.77 1.60 L-3.03 1.03 L-3.17 0.42 L-3.19 -0.21 L-3.09 -0.83 L-2.87 -1.42 L-2.54 -1.95 L-2.11 -2.41 L-1.60 -2.77 L-1.03 -3.03 L-0.42 -3.17 L0.21 -3.19 L0.83 -3.09 L1.42 -2.87 L1.95 -2.54 L2.41 -2.11 L2.77 -1.60 L3.03 -1.03 L3.17 -0.42Z" fill="currentColor" fill-opacity="0.25" fill-rule="evenodd" stroke="currentColor" stroke-width="1.8" stroke-linejoin="round"/></svg>
<svg class="i" style="left:1047.3px;top:436.2px;color:#fbfbfe;" width="25" height="28.5" viewBox="0 0 25 28.5"><path d="M12.5 2 L22.8 7.7 V20.8 L12.5 26.4 L2.2 20.8 V7.7 Z" fill="#696873" stroke="none"/><path d="M4.6 21.7 C4.9 19.6 5.6 18.5 7.6 18.3 L10 18.2 Q10.9 18.1 10.75 17.45 A5.55 5.55 0 1 1 14.05 17.45 Q13.9 18.1 14.8 18.2 L17.2 18.3 C19.2 18.5 19.9 19.6 20.2 21.7 L12.5 26.4 Z" fill="#3b3a45"/><path fill="none" stroke="currentColor" stroke-linecap="round" stroke-linejoin="round" stroke-width="1.55" d="M4.6 21.7 C4.9 19.6 5.6 18.5 7.6 18.3 L10 18.2 Q10.9 18.1 10.75 17.45 A5.55 5.55 0 1 1 14.05 17.45 Q13.9 18.1 14.8 18.2 L17.2 18.3 C19.2 18.5 19.9 19.6 20.2 21.7"/><path d="M12.5 2 L22.8 7.7 V20.8 L12.5 26.4 L2.2 20.8 V7.7 Z" fill="none" stroke="currentColor" stroke-linecap="round" stroke-linejoin="round" stroke-width="1.6"/></svg>
<svg class="i" style="left:1045.7px;top:480.5px;color:#fbfbfe;" width="29" height="29" viewBox="0 0 29 29"><path d="M3.22 18.83 L2.79 18.78 L2.39 18.93 L2.10 19.26 L2.00 19.59 L2.00 25.39 L2.07 25.64 L2.20 25.87 L2.56 26.13 L2.90 26.20 L8.03 26.20 L8.28 26.16 L8.52 26.05 L8.81 25.74 L8.92 25.41 L8.90 25.07 L8.64 24.13 L8.61 23.40 L8.66 22.92 L8.78 22.45 L9.12 21.71 L9.39 21.31 L9.72 20.95 L10.08 20.64 L10.49 20.37 L10.93 20.17 L11.39 20.02 L11.86 19.93 L12.34 19.90 L12.83 19.94 L13.30 20.04 L13.76 20.20 L14.19 20.42 L14.88 20.95 L15.21 21.31 L15.48 21.71 L15.79 22.37 L15.97 23.16 L16.00 23.64 L15.96 24.13 L15.70 25.07 L15.67 25.32 L15.75 25.66 L15.95 25.94 L16.16 26.10 L16.49 26.20 L18.78 26.18 L19.10 26.05 L19.30 25.87 L19.43 25.64 L19.50 25.39 L19.50 19.85 L19.54 19.57 L19.65 19.33 L19.98 19.04 L20.40 18.93 L21.69 19.26 L22.17 19.30 L22.71 19.26 L23.59 19.03 L24.28 18.66 L24.66 18.36 L25.00 18.02 L25.29 17.63 L25.61 17.04 L25.78 16.53 L25.87 16.05 L25.89 15.39 L25.83 14.91 L25.61 14.16 L25.15 13.37 L24.62 12.80 L24.23 12.51 L23.81 12.27 L23.13 12.02 L22.41 11.91 L21.51 11.97 L20.42 12.27 L20.07 12.20 L19.77 12.01 L19.61 11.80 L19.51 11.46 L19.48 9.52 L19.35 9.20 L19.10 8.95 L18.69 8.80 L16.30 8.79 L16.05 8.73 L15.82 8.59 L15.56 8.24 L15.50 7.81 L15.92 6.55 L15.99 6.01 L15.99 5.53 L15.92 5.05 L15.79 4.58 L15.39 3.77 L15.10 3.38 L14.72 3.00 L14.18 2.61 L13.74 2.39 L13.29 2.23 L12.75 2.13 L12.27 2.10 L11.61 2.17 L11.14 2.29 L10.69 2.47 L10.02 2.88 L9.38 3.52 L9.11 3.92 L8.89 4.36 L8.67 5.11 L8.61 6.01 L8.72 6.73 L9.07 7.64 L9.11 7.90 L9.04 8.24 L8.78 8.59 L8.47 8.76 L8.19 8.80 L2.81 8.80 L2.40 8.95 L2.11 9.28 L2.00 9.61 L2.00 11.21 L2.10 11.54 L2.32 11.81 L2.62 11.98 L2.96 12.02 L4.07 11.74 L4.89 11.71 L5.60 11.84 L6.28 12.10 L7.01 12.59 L7.35 12.93 L7.65 13.31 L8.03 14.03 L8.18 14.49 L8.27 14.96 L8.30 15.44 L8.26 15.93 L8.16 16.40 L8.00 16.86 L7.78 17.29 L7.51 17.69 L7.18 18.05 L6.82 18.36 L6.41 18.63 L5.97 18.83 L5.51 18.98 L5.04 19.07 L4.56 19.10 L4.07 19.06Z" fill="#696873" stroke="currentColor" stroke-width="1.9" stroke-linejoin="round"/></svg>
<svg class="i" style="left:1048.8px;top:543.0px;color:#fbfbfe;" width="24" height="24" viewBox="-8 -8 24 24"><path d="M-5.12 -1.73 L-5.37 -1.88 L-5.66 -1.89 L-5.92 -1.77 L-6.10 -1.55 L-6.23 -0.94 L-6.29 -0.32 L-6.29 0.32 L-6.23 0.94 L-6.11 1.54 L-5.93 2.14 L-5.41 3.23 L-4.86 4.01 L-4.44 4.46 L-3.99 4.88 L-3.25 5.40 L-2.68 5.70 L-1.84 6.02 L-1.21 6.18 L-0.60 6.27 L0.29 6.29 L1.21 6.18 L1.98 5.99 L2.17 6.00 L2.39 6.09 L9.37 13.18 L9.74 13.49 L10.18 13.73 L10.47 13.84 L10.96 13.94 L11.70 13.90 L12.18 13.75 L12.57 13.55 L12.97 13.24 L13.17 13.01 L13.45 12.60 L13.62 12.19 L13.75 11.45 L13.65 10.71 L13.47 10.24 L13.32 9.98 L13.01 9.60 L6.02 2.45 L5.95 2.10 L6.23 0.94 L6.30 0.01 L6.23 -0.91 L6.03 -1.81 L5.70 -2.68 L5.25 -3.49 L4.66 -4.24 L3.99 -4.88 L3.25 -5.40 L2.68 -5.70 L1.84 -6.02 L1.21 -6.18 L0.32 -6.29 L-0.60 -6.27 L-1.44 -6.13 L-1.74 -5.96 L-1.86 -5.77 L-1.90 -5.60 L-1.89 -5.43 L-1.80 -5.21 L0.84 -2.56 L0.98 -2.35 L1.02 -2.12 L0.98 -1.89 L0.84 -1.69 L-1.69 0.84 L-1.95 1.00 L-2.24 1.01 L-2.50 0.89Z" fill="#696873" stroke="currentColor" stroke-width="1.6" stroke-linejoin="round"/></svg>
<svg class="i" style="left:1046.0px;top:585.3px;color:#fbfbfe;" width="26" height="26" viewBox="-13 -13 26 26"><circle cx="0" cy="0" r="11.3" fill="#696873" stroke="currentColor" stroke-width="1.6"/><text x="0" y="6.9" text-anchor="middle" font-family="Liberation Sans, sans-serif" font-size="19.5" fill="currentColor" stroke="currentColor" stroke-width=".15">?</text></svg>
<svg class="i" style="left:1046.9px;top:642.9px;color:#fbfbfe;" width="24" height="26" viewBox="-12 -14 24 26"><path fill="none" stroke="currentColor" stroke-linecap="round" stroke-linejoin="round" stroke-width="1.8" d="M4.14 -8.88 A9.8 9.8 0 1 1 -4.14 -8.88"/><path fill="none" stroke="currentColor" stroke-linecap="butt" stroke-linejoin="round" stroke-width="1.8" d="M0 -12.3 V-4.3"/></svg>
<svg class="i" style="left:1238.0px;top:339.2px;color:#fbfbfe;" width="16" height="16" viewBox="-8 -8 16 16"><path fill="none" stroke="currentColor" stroke-linecap="butt" stroke-linejoin="round" stroke-width="1.6" d="M-6.9 0 H6.9"/></svg>
<svg class="i" style="left:1370.7px;top:339.2px;color:#fbfbfe;" width="16" height="16" viewBox="-8 -8 16 16"><path fill="none" stroke="currentColor" stroke-linecap="butt" stroke-linejoin="round" stroke-width="1.6" d="M-6.9 0 H6.9 M0 -6.9 V6.9"/></svg>
<svg class="i" style="left:1247.5px;top:291.2px;color:#fbfbfe;" width="24" height="24" viewBox="-12 -12 24 24"><rect x="-3.6" y="-3.6" width="7.2" height="7.2" rx="1.6" fill="#6f6e79" stroke="currentColor" stroke-width="1.5"/><path fill="none" stroke="currentColor" stroke-linecap="round" stroke-linejoin="round" stroke-width="1.4" d="M-10.6 -10.6 L-5.6 -5.6 M-9.0 -5.6 H-5.6 V-9.0 M-10.6 10.6 L-5.6 5.6 M-9.0 5.6 H-5.6 V9.0 M10.6 -10.6 L5.6 -5.6 M9.0 -5.6 H5.6 V-9.0 M10.6 10.6 L5.6 5.6 M9.0 5.6 H5.6 V9.0"/></svg>
<svg class="i" style="left:1300.4px;top:291.2px;color:#ffffff;" width="24" height="24" viewBox="-12 -12 24 24"><rect x="-3.6" y="-3.6" width="7.2" height="7.2" rx="1.6" fill="#7fb2f0" stroke="currentColor" stroke-width="1.5"/><path fill="none" stroke="currentColor" stroke-linecap="round" stroke-linejoin="round" stroke-width="1.5" d="M-10.4 -4.200000000000001 V-5.800000000000001 A4.6 4.6 0 0 1 -5.800000000000001 -10.4 H-4.200000000000001 M-10.4 4.200000000000001 V5.800000000000001 A4.6 4.6 0 0 0 -5.800000000000001 10.4 H-4.200000000000001 M10.4 -4.200000000000001 V-5.800000000000001 A4.6 4.6 0 0 0 5.800000000000001 -10.4 H4.200000000000001 M10.4 4.200000000000001 V5.800000000000001 A4.6 4.6 0 0 1 5.800000000000001 10.4 H4.200000000000001 "/></svg>
<svg class="i" style="left:1353.2px;top:291.2px;color:#fbfbfe;" width="24" height="24" viewBox="-12 -12 24 24"><rect x="-3.6" y="-3.6" width="7.2" height="7.2" rx="1.6" fill="#6f6e79" stroke="currentColor" stroke-width="1.5"/><path fill="none" stroke="currentColor" stroke-linecap="round" stroke-linejoin="round" stroke-width="1.4" d="M-5.2 -5.2 L-10.6 -10.6 M-6.8 -10.6 H-10.6 V-6.8 M-5.2 5.2 L-10.6 10.6 M-6.8 10.6 H-10.6 V6.8 M5.2 -5.2 L10.6 -10.6 M6.8 -10.6 H10.6 V-6.8 M5.2 5.2 L10.6 10.6 M6.8 10.6 H10.6 V6.8"/></svg>
<div class="ann" style="left:1306.7px;top:-2.6px"></div>
<div class="annt" id="d1" style="left:1312.2px;top:-1.8px;font-size:71px;transform:scaleX(0.96);clip-path:polygon(0 0,100% 0,100% 71.5%,60.4% 71.5%,60.4% 100%,44% 100%,44% 71.5%,0 71.5%);">1</div>
<div class="ann" style="left:969.2px;top:387.9px"></div>
<div class="annt" id="d2" style="left:975.5px;top:387.7px;font-size:72px;transform:scaleX(1.0);">2</div>
<div class="ann" style="left:273.7px;top:244.6px"></div>
<div class="annt" id="d3" style="left:279.6px;top:244.2px;font-size:73px;transform:scaleX(1.02);">3</div>
<div class="ann" style="left:1158.8px;top:784.7px"></div>
<div class="annt" id="d4" style="left:1162.5px;top:785.0px;font-size:71.5px;transform:scaleX(1.07);">4</div>

</div>
</body></html>
